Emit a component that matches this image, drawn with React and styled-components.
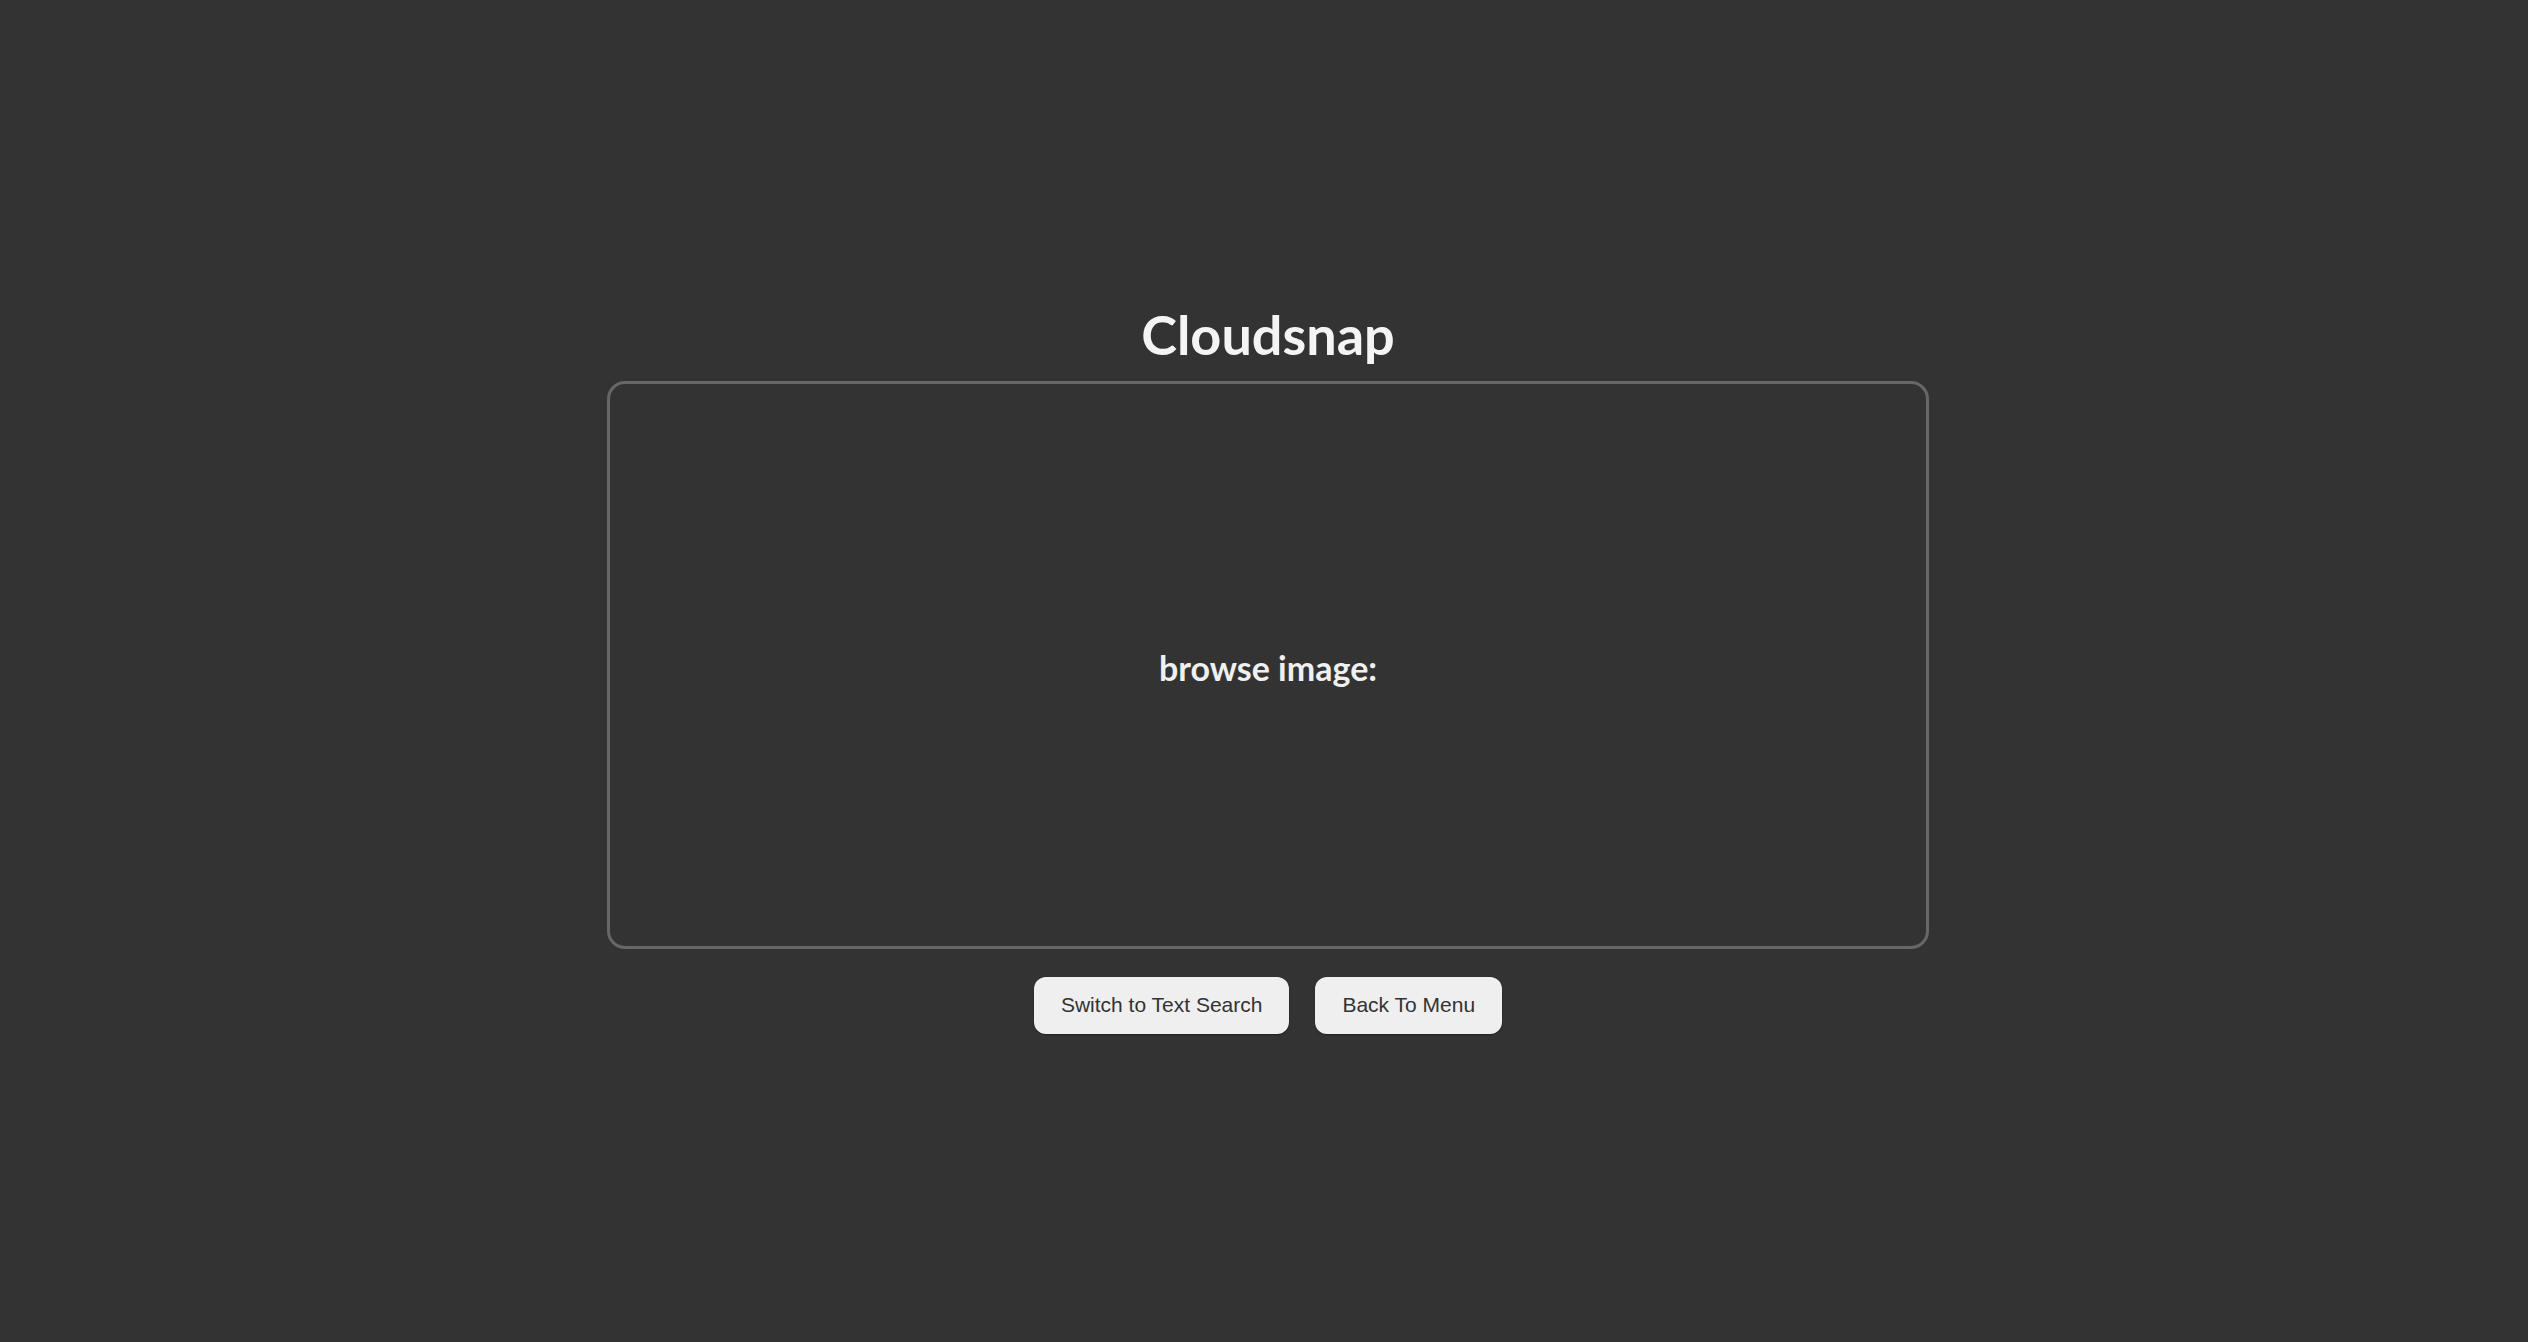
import React from 'react';
import styled, { createGlobalStyle } from 'styled-components';

const GlobalStyle = createGlobalStyle`
    html, body {
        margin: 0;
        padding: 0;
        background: #333333;
    }
    body {
        font-family: Lato, "Open Sans", sans-serif;
        color: #f2f2f2;
    }
`;

const Page = styled.main`
    min-height: 100vh;
    display: flex;
    flex-direction: column;
    align-items: center;
    justify-content: center;
    box-sizing: border-box;
    padding: 0 0 16px 8px;
`;

const Title = styled.h1`
    margin: 0 0 6px 0;
    padding-top: 2px;
    font-size: 54px;
    font-weight: 700;
    line-height: 80px;
    color: #f4f4f4;
`;

const DropZone = styled.div`
    width: 1322px;
    height: 568px;
    box-sizing: border-box;
    border: 3px solid #676767;
    border-radius: 18px;
    display: flex;
    align-items: center;
    justify-content: center;
`;

const Label = styled.label`
    padding-top: 6px;
    font-size: 34px;
    font-weight: 700;
    color: #f0f0f0;
`;

const ButtonRow = styled.div`
    display: flex;
    gap: 26px;
    margin-top: 28px;
`;

const Button = styled.button`
    height: 57px;
    padding: 0 27px;
    background: #efefef;
    border: none;
    border-radius: 12px;
    font-family: "Liberation Sans", Arial, sans-serif;
    font-size: 21px;
    color: #333;
    box-shadow: 0 1px 2px rgba(0, 0, 0, 0.35);
    cursor: pointer;
`;

const App = () => {
    return (
        <>
            <GlobalStyle />
            <Page>
                <Title>Cloudsnap</Title>
                <DropZone>
                    <Label>browse image:</Label>
                </DropZone>
                <ButtonRow>
                    <Button>Switch to Text Search</Button>
                    <Button>Back To Menu</Button>
                </ButtonRow>
            </Page>
        </>
    );
};

export default App;
